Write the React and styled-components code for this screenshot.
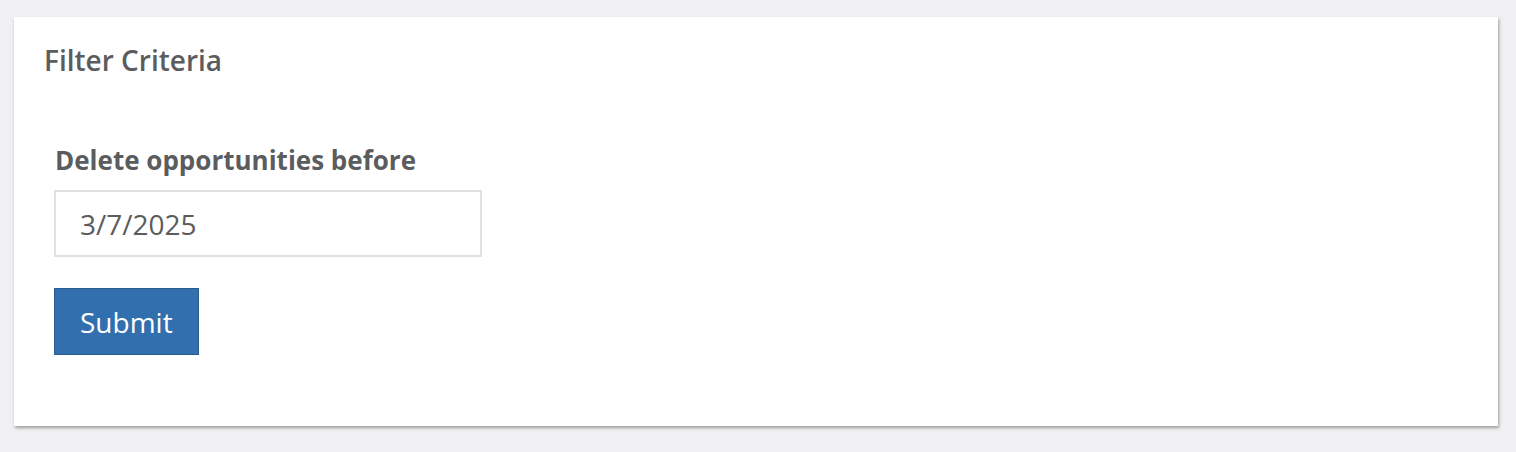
import React from 'react'
import styled, { createGlobalStyle } from 'styled-components'

const GlobalStyle = createGlobalStyle`
  * {
    margin: 0;
    padding: 0;
    box-sizing: border-box;
  }
  body {
    background-color: #f0f0f2;
    font-family: "Open Sans", "Noto Sans", sans-serif;
  }
`

const Page = styled.div`
  padding: 17px 18px 26px 14px;
`

const Card = styled.section`
  background-color: #fff;
  height: 409px;
  padding: 29px 30px 0 30px;
  box-shadow: 1px 2px 3px rgba(0, 0, 0, 0.35);
`

const Title = styled.h3`
  font-size: 28px;
  font-weight: 600;
  line-height: 1;
  color: #5b5c5e;
`

const Form = styled.form`
  display: flex;
  flex-direction: column;
  align-items: flex-start;
  padding: 73px 10px 0 10px;
`

const Label = styled.label`
  font-size: 26px;
  font-weight: 700;
  line-height: 1;
  color: #5b5c5e;
  margin: 0 0 17px 1px;
`

const DateInput = styled.input`
  width: 428px;
  height: 67px;
  border: 2px solid #e1e1e1;
  padding: 0 24px;
  font-family: inherit;
  font-size: 28px;
  color: #5b5c5e;
  outline: none;
  margin-bottom: 31px;
`

const Button = styled.button`
  height: 67px;
  padding: 0 25px;
  background-color: #316fae;
  border: 1px solid #285b8f;
  color: #fff;
  font-family: inherit;
  font-size: 28px;
  cursor: pointer;
`

export default function App() {
  return (
    <Page>
      <GlobalStyle />
      <Card>
        <Title>Filter Criteria</Title>
        <Form onSubmit={e => e.preventDefault()}>
          <Label htmlFor="before">Delete opportunities before</Label>
          <DateInput id="before" type="text" defaultValue="3/7/2025" />
          <Button type="submit">Submit</Button>
        </Form>
      </Card>
    </Page>
  )
}
